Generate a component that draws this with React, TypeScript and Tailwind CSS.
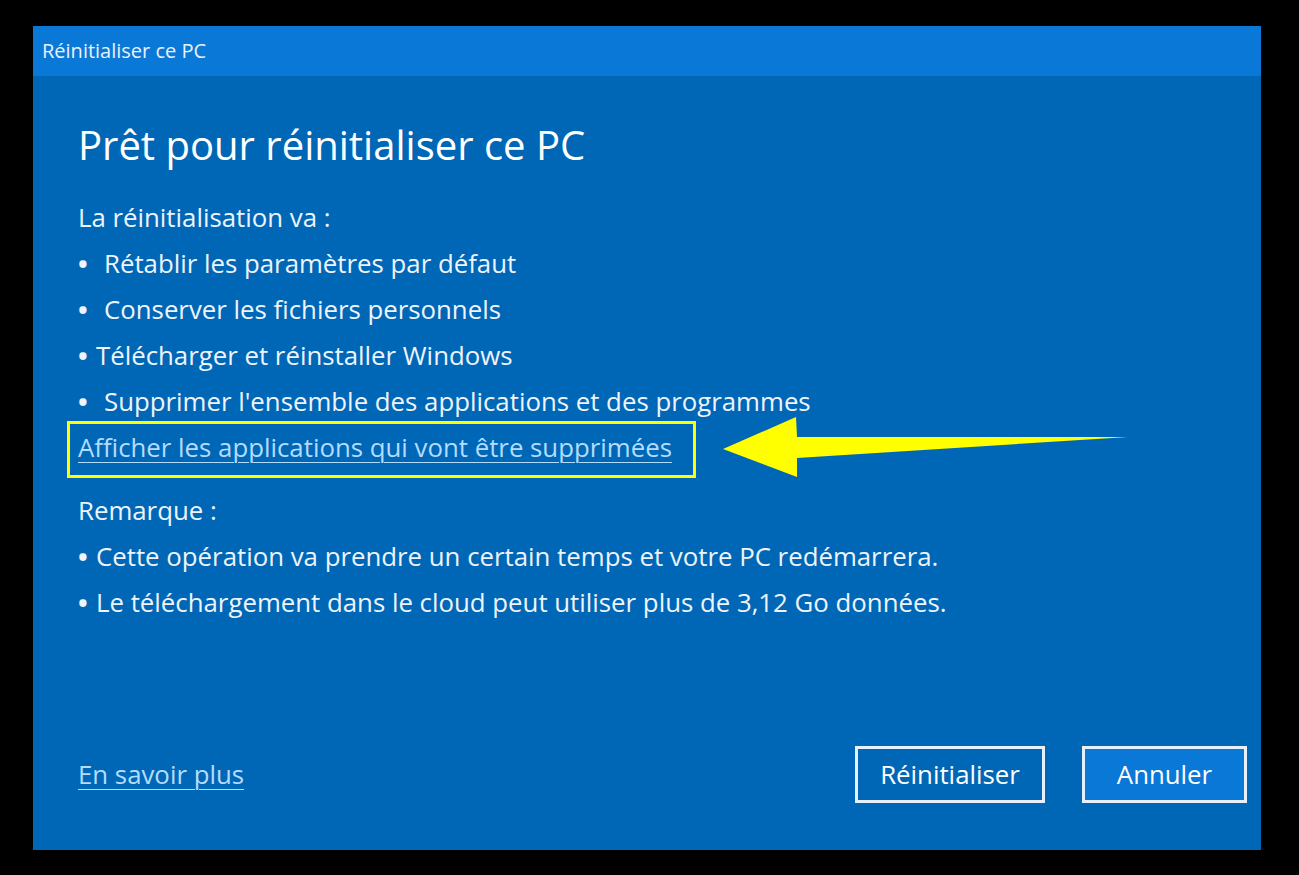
export default function App() {
  const font = { fontFamily: '"Open Sans", "Noto Sans", sans-serif' };
  return (
    <div className="w-[1299px] h-[875px] bg-black pl-[33px] pt-[26px]" style={font}>
      <div className="w-[1228px] h-[824px] flex flex-col bg-[#0067b6]">
        {/* title bar */}
        <div className="h-[50px] bg-[#0a78d6] flex items-center pl-[9px] pb-[1px] text-[20px] text-[#e8f1fb]">
          Réinitialiser ce PC
        </div>

        <div className="relative flex-1 flex flex-col pl-[45px] pr-[14px] pt-[44px] pb-[47px] text-[#eef4fb]">
          <h1 className="h-[50px] leading-[50px] text-[40px] font-normal text-white">
            Prêt pour réinitialiser ce PC
          </h1>

          <div className="mt-[24px] text-[25.8px]">
            <div className="h-[46px] leading-[46px]">La réinitialisation va :</div>
            <div className="h-[46px] leading-[46px]"><span className="inline-block w-[26px] font-bold">•</span>Rétablir les paramètres par défaut</div>
            <div className="h-[46px] leading-[46px]"><span className="inline-block w-[26px] font-bold">•</span>Conserver les fichiers personnels</div>
            <div className="h-[46px] leading-[46px]"><span className="inline-block w-[18px] font-bold">•</span>Télécharger et réinstaller Windows</div>
            <div className="h-[46px] leading-[46px]"><span className="inline-block w-[26px] font-bold">•</span>Supprimer l'ensemble des applications et des programmes</div>

            <div className="-ml-[11px] w-[629px] h-[57px] border-[3px] border-[#ffff00] pl-[8px] leading-[47px] text-[#b3dcff] underline decoration-1 underline-offset-[5px] mt-[-3px]">
              Afficher les applications qui vont être supprimées
            </div>

            <div className="mt-[9px] h-[46px] leading-[46px]">Remarque :</div>
            <div className="h-[46px] leading-[46px]"><span className="inline-block w-[18px] font-bold">•</span>Cette opération va prendre un certain temps et votre PC redémarrera.</div>
            <div className="h-[46px] leading-[46px]"><span className="inline-block w-[18px] font-bold">•</span>Le téléchargement dans le cloud peut utiliser plus de 3,12 Go données.</div>
          </div>

          {/* annotation arrow */}
          <svg className="absolute left-[690px] top-[341px]" width="420" height="70" viewBox="0 0 420 70">
            <polygon points="0,32 73,0 74,20 405,20 74,41 74,60" fill="#ffff00" />
          </svg>

          <div className="mt-auto flex items-center">
            <a className="text-[25.8px] text-[#b3dcff] underline decoration-1 underline-offset-[5px]">En savoir plus</a>
            <div className="ml-auto flex gap-[37px]">
              <button className="w-[190px] h-[57px] border-[3px] border-[#e8f1fb] text-[25.8px] text-white bg-[#0067b6]">
                Réinitialiser
              </button>
              <button className="w-[165px] h-[57px] border-[3px] border-[#e8f1fb] text-[25.8px] text-white bg-[#0a78d6]">
                Annuler
              </button>
            </div>
          </div>
        </div>
      </div>
    </div>
  );
}
